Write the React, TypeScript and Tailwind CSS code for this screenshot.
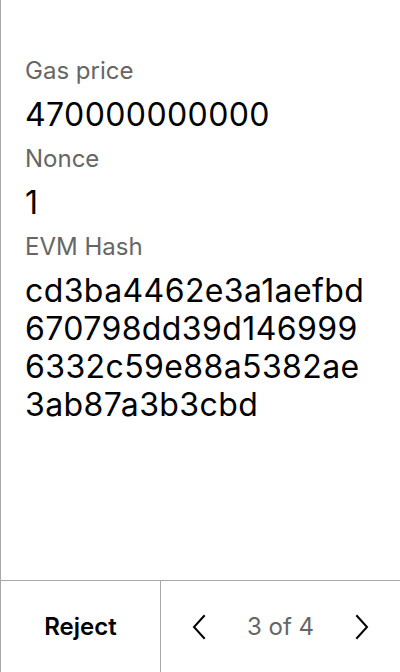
import * as React from "react";

const rows = [
  { label: "Gas price", lines: ["470000000000"] },
  { label: "Nonce", lines: ["1"] },
  {
    label: "EVM Hash",
    lines: ["cd3ba4462e3a1aefbd", "670798dd39d146999", "6332c59e88a5382ae", "3ab87a3b3cbd"],
  },
];

function Chevron({ dir }: { dir: "left" | "right" }) {
  return (
    <svg width="16" height="26" viewBox="0 0 16 26" fill="none" stroke="#000" strokeWidth="2" strokeLinecap="square">
      {dir === "left" ? <path d="M13 2 L3 13 L13 24" /> : <path d="M3 2 L13 13 L3 24" />}
    </svg>
  );
}

export default function App() {
  return (
    <div
      className="flex h-[672px] w-[400px] flex-col border-l border-[#a8a8a8] bg-white"
      style={{ fontFamily: "Inter, 'Noto Sans', sans-serif" }}
    >
      <div className="flex-1 px-6 pt-[55px]">
        {rows.map((r, i) => (
          <div key={r.label} className={i > 0 ? "mt-[9px]" : ""}>
            <div className="text-[24px] leading-[32px] text-[#666]">{r.label}</div>
            <div className="mt-[9px] text-[32px] leading-[38px] tracking-[0.4px] text-black">
              {r.lines.map((l) => (
                <div key={l}>{l}</div>
              ))}
            </div>
          </div>
        ))}
      </div>

      <div className="flex h-[92px] border-t border-[#a8a8a8]">
        <button type="button" className="w-[159px] text-[24px] font-semibold text-black">
          Reject
        </button>
        <div className="flex flex-1 items-center justify-between border-l border-[#a8a8a8] px-4">
          <button type="button" className="flex h-11 w-11 items-center justify-center">
            <Chevron dir="left" />
          </button>
          <span className="text-[24px] text-[#666]">3 of 4</span>
          <button type="button" className="flex h-11 w-11 items-center justify-center">
            <Chevron dir="right" />
          </button>
        </div>
      </div>
    </div>
  );
}
